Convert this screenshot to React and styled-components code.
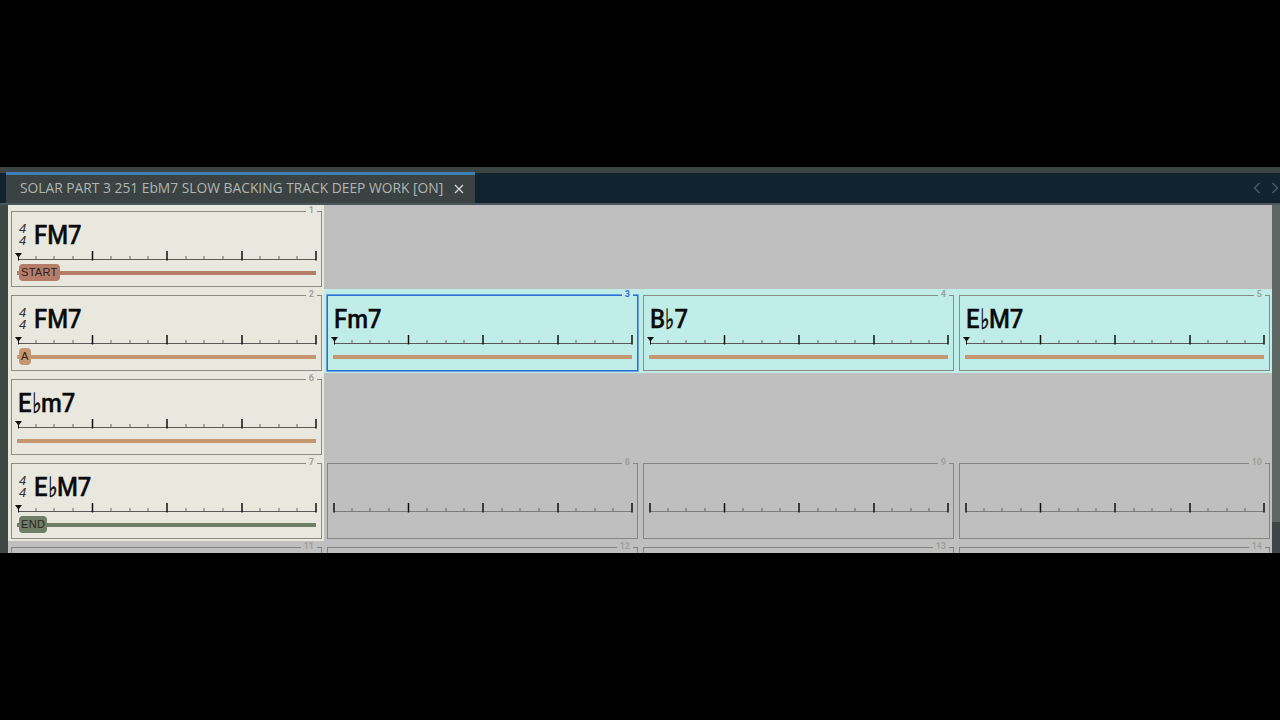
import React from "react";
import styled, { createGlobalStyle } from "styled-components";

const GlobalStyle = createGlobalStyle`
  html, body {
    margin: 0;
    background: #000;
    font-family: "Roboto", "DejaVu Sans", sans-serif;
  }
`;

const Page = styled.div`
  height: 720px;
  padding-top: 167px;
  box-sizing: border-box;
  background: #000;
  overflow: hidden;
`;

const Window = styled.div`
  height: 386px;
  display: flex;
  flex-direction: column;
  background: #3e4644;
  overflow: hidden;
`;

const TopStrip = styled.div`
  height: 6px;
  flex: none;
  background: #3c4442;
`;

const TabBar = styled.div`
  height: 30px;
  flex: none;
  display: flex;
  justify-content: space-between;
  padding-left: 6px;
  background: #12232f;
`;

const Tab = styled.div`
  width: 469px;
  box-sizing: border-box;
  display: flex;
  align-items: center;
  justify-content: space-between;
  padding: 0 11px 3px 14px;
  background: #3a4242;
  border-top: 3px solid #3d7fb5;
  margin-top: -1px;
  color: #b0b6b2;
  font-family: "Open Sans", "Liberation Sans", sans-serif;
  font-size: 13.8px;
  white-space: nowrap;
`;

const Close = styled.svg`
  width: 10px;
  height: 10px;
  margin-top: 3px;
`;

const Arrows = styled.div`
  display: flex;
  align-items: center;
  gap: 10px;
  margin-right: 1px;
`;

const Arrow = styled.svg`
  width: 8px;
  height: 12px;
  fill: none;
  stroke: #4d5b66;
  stroke-width: 1.4;
`;

const Divider = styled.div`
  height: 2px;
  flex: none;
  background: #4a555c;
`;

const Body = styled.div`
  flex: 1;
  display: flex;
  min-height: 0;
`;

const Gutter = styled.div`
  width: 8px;
  flex: none;
  background: #3f4745;
`;

const Score = styled.div`
  width: 1264px;
  flex: none;
  display: grid;
  grid-template-columns: repeat(4, 316px);
  grid-auto-rows: 84px;
  background: #bfbfbf;
`;

const Scrollbar = styled.div`
  flex: 1;
  background: linear-gradient(#5e6664 0 317px, #3d4644 317px);
`;

const Cell = styled.div`
  box-sizing: border-box;
  padding: 6px 2px 2px 3px;
  background: ${(p) => p.$bg};
`;

const Frame = styled.div`
  position: relative;
  height: 76px;
  box-sizing: border-box;
  display: flex;
  flex-direction: column;
  border: 1px solid ${(p) => (p.$selected ? "#2c6fd4" : p.$muted ? "#858583" : "#8c8c85")};
  box-shadow: ${(p) => (p.$selected ? "0 0 0 0.6px #2c6fd4" : "none")};
  padding: 0 0 0 4px;
`;

const BarNumber = styled.span`
  position: absolute;
  top: -7px;
  right: 4px;
  padding: 0 3px;
  background: ${(p) => p.$bg};
  color: ${(p) => (p.$selected ? "#2c6fd4" : "#a0a09a")};
  font-size: 9px;
  font-weight: 700;
  line-height: 11px;
`;

const Heading = styled.div`
  height: 39px;
  flex: none;
  display: flex;
  align-items: flex-start;
  padding: 8px 0 0 2px;
  box-sizing: border-box;
`;

const TimeSig = styled.div`
  width: 15px;
  margin: 3px 0 0 1px;
  flex: none;
  display: flex;
  flex-direction: column;
  color: #333;
  font-family: "Liberation Sans", sans-serif;
  font-size: 13px;
  font-style: italic;
  line-height: 11.5px;
`;

const Chord = styled.div`
  display: flex;
  align-items: baseline;
  color: #0b0b0b;
  font-size: 26px;
  font-weight: 500;
  line-height: 30px;
  white-space: nowrap;
  -webkit-text-stroke: 0.3px #0b0b0b;
  transform: scaleX(0.92);
  transform-origin: left center;
`;

const Flat = styled.span`
  display: inline-block;
  margin: 0 -2px 0 -1px;
  font-family: "DejaVu Sans", sans-serif;
  font-size: 28px;
  line-height: 0;
  -webkit-text-stroke: 0.6px #0b0b0b;
  transform: scaleX(0.75) translateY(1px);
`;

const Ruler = styled.svg`
  display: block;
  width: 304px;
  height: 11px;
  flex: none;
  overflow: visible;
`;

const Track = styled.div`
  position: relative;
  height: 17px;
  margin: 2px 0 0 1px;
  width: 299px;
  display: flex;
  align-items: center;
  &::before {
    content: "";
    position: absolute;
    left: 0;
    right: 0;
    top: 7px;
    height: 4px;
    background: ${(p) => p.$color};
  }
`;

const Section = styled.span`
  position: relative;
  height: 17px;
  box-sizing: border-box;
  margin-left: 2px;
  padding: 0 2px;
  border-radius: 4px;
  background: ${(p) => p.$color};
  color: #2a221c;
  font-family: "Liberation Sans", sans-serif;
  font-size: 11px;
  line-height: 17px;
  letter-spacing: 0.3px;
`;

const MINOR = [18, 36, 55, 93, 112, 130, 168, 186, 205, 242, 261, 279];
const MAJOR = [74.5, 149, 224, 298];

const BarRuler = ({ marker, muted }) => (
  <Ruler viewBox="0 0 304 11">
    <line x1="2" x2="300" y1="8.5" y2="8.5" stroke={muted ? "#7d7d7d" : "#5a5a5a"} />
    {MINOR.map((x) => (
      <line key={x} x1={x + 2} x2={x + 2} y1="5" y2="8.5" stroke="#666" />
    ))}
    {MAJOR.map((x) => (
      <line key={x} x1={x + 2} x2={x + 2} y1="0" y2="9.5" stroke="#111" strokeWidth="1.5" />
    ))}
    {marker ? (
      <path d="M-1 2h7l-3 4v3.5h-1V6z" fill="#111" />
    ) : (
      <line x1="2" x2="2" y1="0" y2="9.5" stroke="#111" strokeWidth="1.5" />
    )}
  </Ruler>
);

const ChordName = ({ name }) => {
  const [root, rest] = name.split("♭");
  if (rest === undefined) return <Chord>{name}</Chord>;
  return (
    <Chord>
      {root}
      <Flat>♭</Flat>
      {rest}
    </Chord>
  );
};

const TONES = {
  cream: "#e9e8df",
  teal: "#c1ede9",
  grey: "#bfbfbf",
};

const START = "#b67c6a";
const VERSE = "#c49770";
const END = "#717e66";

const cells = [
  { n: 1, tone: "cream", sig: true, chord: "FM7", bar: START, section: "START" },
  null,
  null,
  null,
  { n: 2, tone: "cream", sig: true, chord: "FM7", bar: VERSE, section: "A" },
  { n: 3, tone: "teal", chord: "Fm7", bar: VERSE, selected: true },
  { n: 4, tone: "teal", chord: "B♭7", bar: VERSE },
  { n: 5, tone: "teal", chord: "E♭M7", bar: VERSE },
  { n: 6, tone: "cream", chord: "E♭m7", bar: VERSE },
  null,
  null,
  null,
  { n: 7, tone: "cream", sig: true, chord: "E♭M7", bar: END, section: "END" },
  { n: 8, tone: "grey" },
  { n: 9, tone: "grey" },
  { n: 10, tone: "grey" },
  { n: 11, tone: "grey" },
  { n: 12, tone: "grey" },
  { n: 13, tone: "grey" },
  { n: 14, tone: "grey" },
];

const Bar = ({ cell }) => {
  const bg = TONES[cell.tone];
  return (
    <Cell $bg={bg}>
      <Frame $selected={cell.selected} $muted={!cell.chord}>
        <BarNumber $bg={bg} $selected={cell.selected}>
          {cell.n}
        </BarNumber>
        <Heading>
          {cell.sig && (
            <TimeSig>
              <span>4</span>
              <span>4</span>
            </TimeSig>
          )}
          {cell.chord && <ChordName name={cell.chord} />}
        </Heading>
        <BarRuler marker={!!cell.chord} muted={!cell.chord} />
        {cell.bar && (
          <Track $color={cell.bar}>
            {cell.section && <Section $color={cell.bar}>{cell.section}</Section>}
          </Track>
        )}
      </Frame>
    </Cell>
  );
};

const App = () => (
  <Page>
    <GlobalStyle />
    <Window>
      <TopStrip />
      <TabBar>
        <Tab>
          SOLAR PART 3 251 EbM7 SLOW BACKING TRACK DEEP WORK [ON]
          <Close viewBox="0 0 10 10">
            <path d="M1 1l8 8M9 1l-8 8" stroke="#d5d8d6" strokeWidth="1.3" />
          </Close>
        </Tab>
        <Arrows>
          <Arrow viewBox="0 0 8 12">
            <path d="M6.5 1L1.5 6l5 5" />
          </Arrow>
          <Arrow viewBox="0 0 8 12">
            <path d="M1.5 1l5 5-5 5" />
          </Arrow>
        </Arrows>
      </TabBar>
      <Divider />
      <Body>
        <Gutter />
        <Score>
          {cells.map((cell, i) => (cell ? <Bar key={cell.n} cell={cell} /> : <div key={`empty-${i}`} />))}
        </Score>
        <Scrollbar />
      </Body>
    </Window>
  </Page>
);

export default App;
